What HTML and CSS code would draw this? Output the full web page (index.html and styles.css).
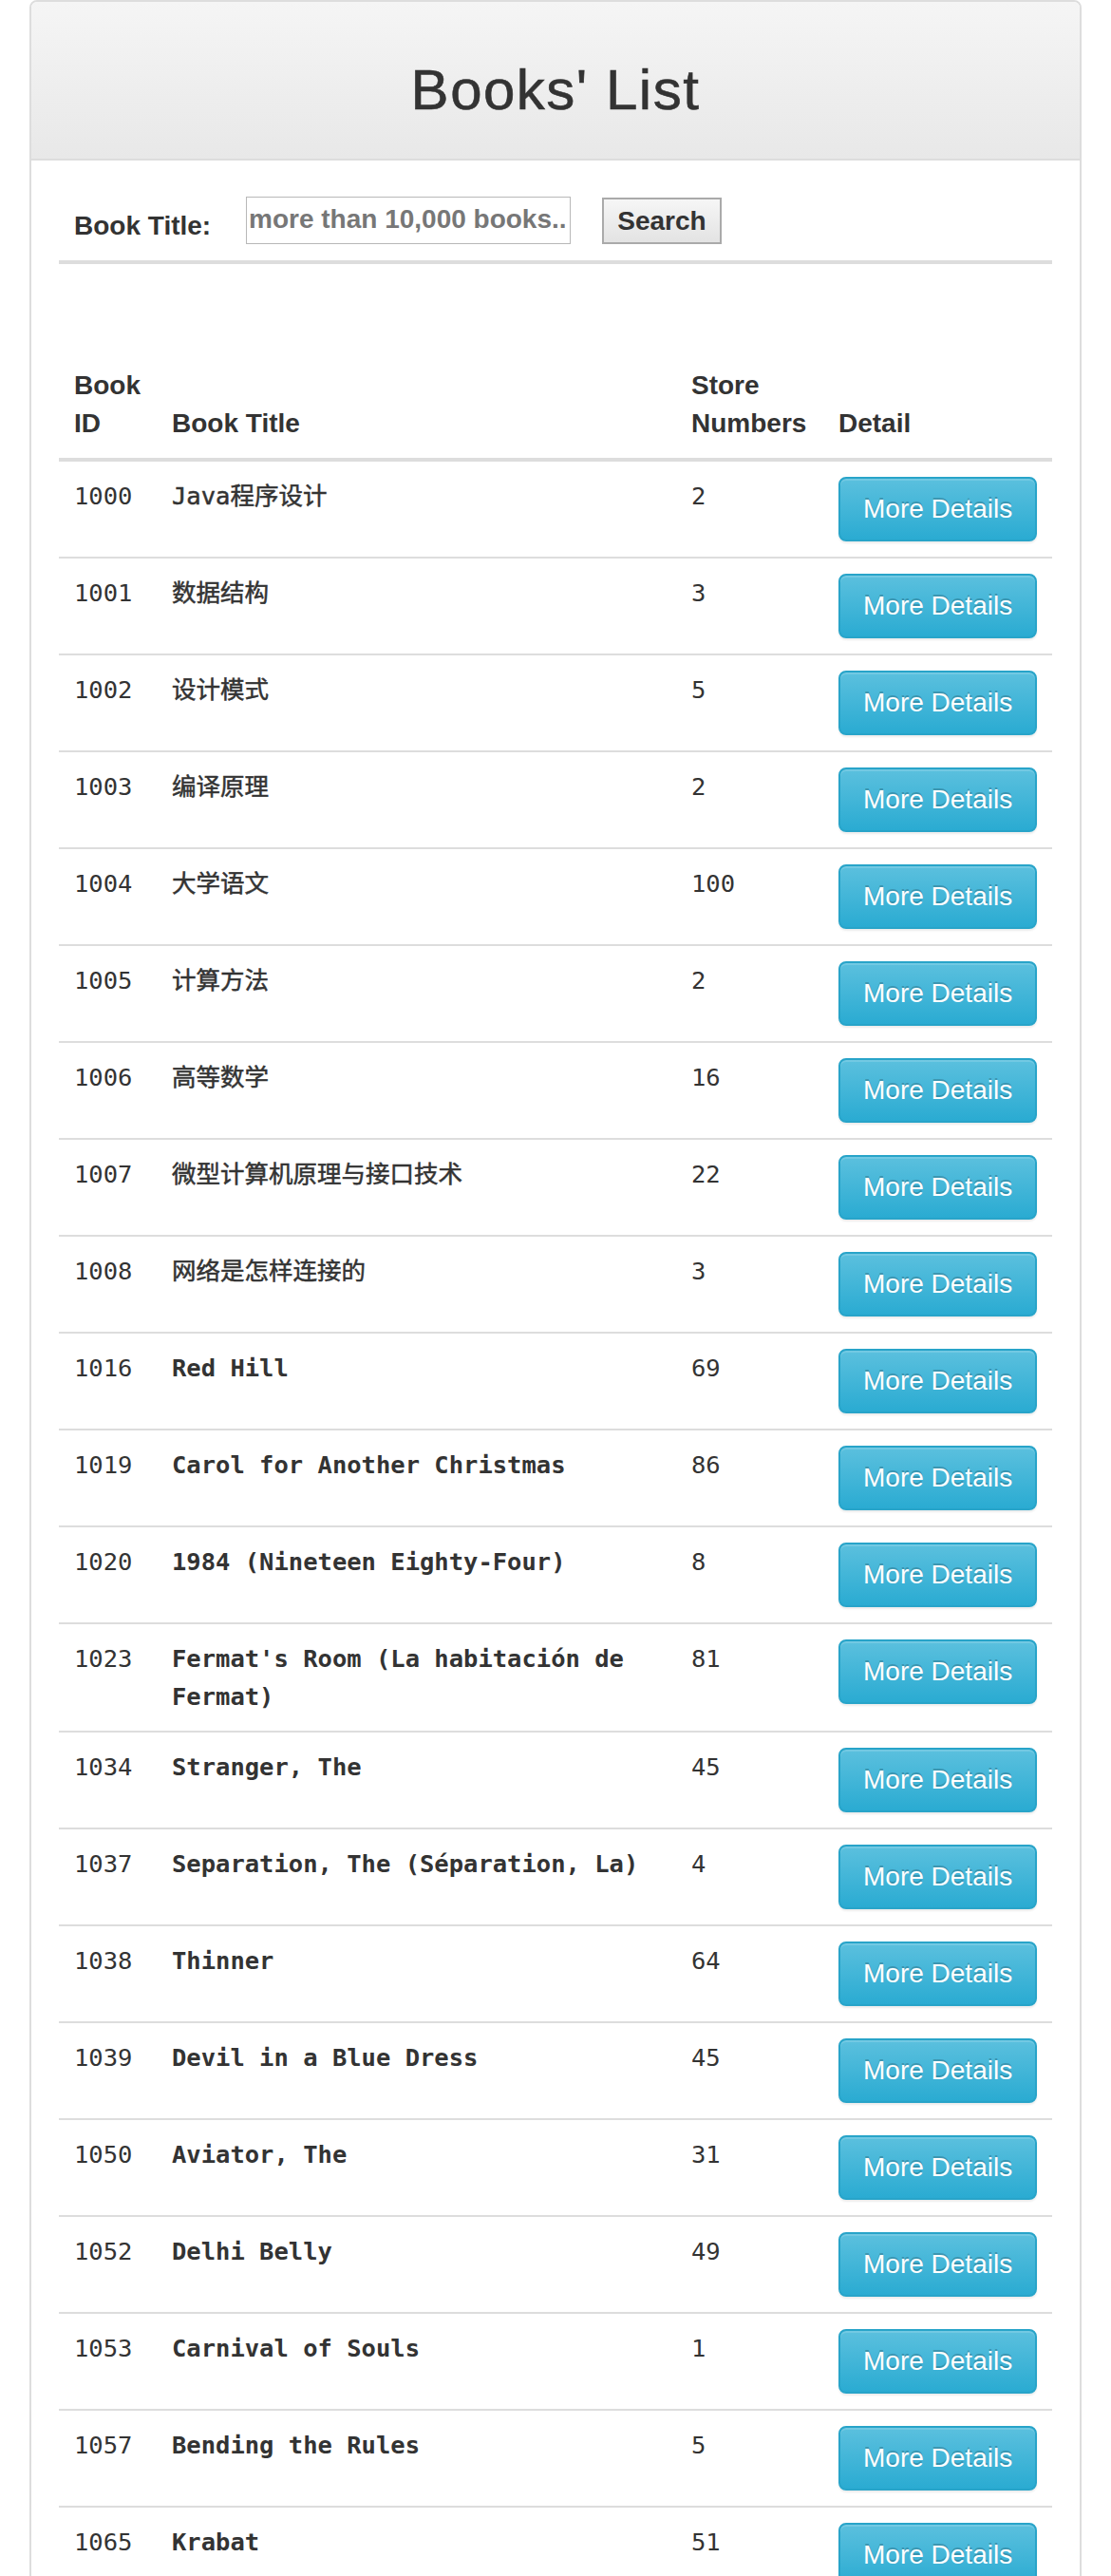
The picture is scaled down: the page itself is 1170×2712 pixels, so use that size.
FILE: index.html
```html
<!DOCTYPE html>
<html lang="en">
<head>
<meta charset="utf-8">
<title>Books' List</title>
<link rel="stylesheet" href="styles.css">
</head>
<body>
<div class="page">
  <div class="panel">
    <div class="panel-heading">
      <h1 class="panel-title">Books' List</h1>
    </div>
    <div class="panel-body">
      <form class="search">
        <label class="search-label" for="q">Book Title:</label>
        <input class="search-input" id="q" type="text" placeholder="more than 10,000 books..">
        <button class="search-btn" type="button">Search</button>
      </form>
      <table class="books">
        <colgroup>
          <col class="col-id">
          <col class="col-title">
          <col class="col-store">
          <col class="col-detail">
        </colgroup>
        <thead>
          <tr><th>Book ID</th><th>Book Title</th><th>Store Numbers</th><th>Detail</th></tr>
        </thead>
        <tbody>
          <tr><td>1000</td><td class="title cjk">Java程序设计</td><td>2</td><td><button class="btn-more" type="button">More Details</button></td></tr>
          <tr><td>1001</td><td class="title cjk">数据结构</td><td>3</td><td><button class="btn-more" type="button">More Details</button></td></tr>
          <tr><td>1002</td><td class="title cjk">设计模式</td><td>5</td><td><button class="btn-more" type="button">More Details</button></td></tr>
          <tr><td>1003</td><td class="title cjk">编译原理</td><td>2</td><td><button class="btn-more" type="button">More Details</button></td></tr>
          <tr><td>1004</td><td class="title cjk">大学语文</td><td>100</td><td><button class="btn-more" type="button">More Details</button></td></tr>
          <tr><td>1005</td><td class="title cjk">计算方法</td><td>2</td><td><button class="btn-more" type="button">More Details</button></td></tr>
          <tr><td>1006</td><td class="title cjk">高等数学</td><td>16</td><td><button class="btn-more" type="button">More Details</button></td></tr>
          <tr><td>1007</td><td class="title cjk">微型计算机原理与接口技术</td><td>22</td><td><button class="btn-more" type="button">More Details</button></td></tr>
          <tr><td>1008</td><td class="title cjk">网络是怎样连接的</td><td>3</td><td><button class="btn-more" type="button">More Details</button></td></tr>
          <tr><td>1016</td><td class="title">Red Hill</td><td>69</td><td><button class="btn-more" type="button">More Details</button></td></tr>
          <tr><td>1019</td><td class="title">Carol for Another Christmas</td><td>86</td><td><button class="btn-more" type="button">More Details</button></td></tr>
          <tr><td>1020</td><td class="title">1984 (Nineteen Eighty-Four)</td><td>8</td><td><button class="btn-more" type="button">More Details</button></td></tr>
          <tr><td>1023</td><td class="title">Fermat's Room (La habitación de Fermat)</td><td>81</td><td><button class="btn-more" type="button">More Details</button></td></tr>
          <tr><td>1034</td><td class="title">Stranger, The</td><td>45</td><td><button class="btn-more" type="button">More Details</button></td></tr>
          <tr><td>1037</td><td class="title">Separation, The (Séparation, La)</td><td>4</td><td><button class="btn-more" type="button">More Details</button></td></tr>
          <tr><td>1038</td><td class="title">Thinner</td><td>64</td><td><button class="btn-more" type="button">More Details</button></td></tr>
          <tr><td>1039</td><td class="title">Devil in a Blue Dress</td><td>45</td><td><button class="btn-more" type="button">More Details</button></td></tr>
          <tr><td>1050</td><td class="title">Aviator, The</td><td>31</td><td><button class="btn-more" type="button">More Details</button></td></tr>
          <tr><td>1052</td><td class="title">Delhi Belly</td><td>49</td><td><button class="btn-more" type="button">More Details</button></td></tr>
          <tr><td>1053</td><td class="title">Carnival of Souls</td><td>1</td><td><button class="btn-more" type="button">More Details</button></td></tr>
          <tr><td>1057</td><td class="title">Bending the Rules</td><td>5</td><td><button class="btn-more" type="button">More Details</button></td></tr>
          <tr><td>1065</td><td class="title">Krabat</td><td>51</td><td><button class="btn-more" type="button">More Details</button></td></tr>
        </tbody>
      </table>
    </div>
  </div>
</div>
</body>
</html>
```

FILE: styles.css
```css
html, body {
  margin: 0;
  padding: 0;
  background: #fff;
}

body {
  font-family: "Liberation Sans", Arial, sans-serif;
  font-size: 28px;
  line-height: 40px;
  color: #333;
}

.page {
  padding: 0 31px;
}

.panel {
  border: 2px solid #ddd;
  border-radius: 8px;
  background: #fff;
  overflow: hidden;
}

.panel-heading {
  background: linear-gradient(to bottom, #f5f5f5 0, #e8e8e8 100%);
  border-bottom: 2px solid #ddd;
  padding: 60px 30px 39px;
  text-align: center;
}

.panel-title {
  margin: 0;
  font-size: 60px;
  font-weight: normal;
  line-height: 66px;
  letter-spacing: 1.5px;
  color: #333;
  -webkit-text-stroke: 0.6px #333;
}

.panel-body {
  padding: 30px 29px;
}

.search {
  display: flex;
  align-items: flex-start;
  height: 75px;
  margin: 0;
  padding-left: 16px;
  border-bottom: 4px solid #ddd;
}

.search-label {
  width: 181px;
  flex: none;
  margin-top: 19px;
  font-weight: bold;
  line-height: 40px;
}

.search-input {
  flex: none;
  box-sizing: border-box;
  width: 342px;
  height: 50px;
  margin: 8px 0 0;
  padding: 0 2px 2px;
  border: 1px solid #b8b8b8;
  border-radius: 0;
  background: #fff;
  font-family: "Liberation Sans", Arial, sans-serif;
  font-size: 28px;
  font-weight: bold;
  color: #333;
  outline: none;
}

.search-input::placeholder {
  color: #777;
  opacity: 1;
}

.search-btn {
  flex: none;
  box-sizing: border-box;
  width: 126px;
  height: 49px;
  margin: 9px 0 0 33px;
  padding: 0;
  border: 2px solid #aaa;
  border-radius: 0;
  background: linear-gradient(to bottom, #f6f6f6 0, #e3e3e3 100%);
  font-family: "Liberation Sans", Arial, sans-serif;
  font-size: 28px;
  font-weight: bold;
  color: #333;
}

.books {
  width: 100%;
  margin-top: 92px;
  border-collapse: separate;
  border-spacing: 0;
  table-layout: fixed;
}

.col-id { width: 103px; }
.col-title { width: 547px; }
.col-store { width: 155px; }
.col-detail { width: auto; }

.books th {
  padding: 16px;
  text-align: left;
  vertical-align: bottom;
  font-weight: bold;
  line-height: 40px;
  border-bottom: 4px solid #ddd;
}

.books td {
  padding: 16px;
  vertical-align: top;
  border-top: 2px solid #ddd;
  font-family: "DejaVu Sans Mono", "Noto Sans CJK SC", monospace;
  font-size: 25.5px;
  line-height: 40px;
  color: #333;
}

.books tbody tr:first-child td {
  border-top: 0;
}

.books td.title {
  font-weight: bold;
}

.books td.cjk {
  font-weight: normal;
  -webkit-text-stroke: 0.5px #333;
}

.btn-more {
  display: inline-block;
  vertical-align: top;
  margin: 0;
  padding: 12px 24px;
  border: 2px solid #28a4c9;
  border-radius: 8px;
  background: linear-gradient(to bottom, #5bc0de 0, #2aabd2 100%);
  box-shadow: inset 0 2px 0 rgba(255, 255, 255, 0.15), 0 2px 2px rgba(0, 0, 0, 0.075);
  font-family: "Liberation Sans", Arial, sans-serif;
  font-size: 28px;
  font-weight: normal;
  line-height: 40px;
  color: #fff;
  text-shadow: 0 -2px 0 rgba(0, 0, 0, 0.2);
  white-space: nowrap;
}
```
